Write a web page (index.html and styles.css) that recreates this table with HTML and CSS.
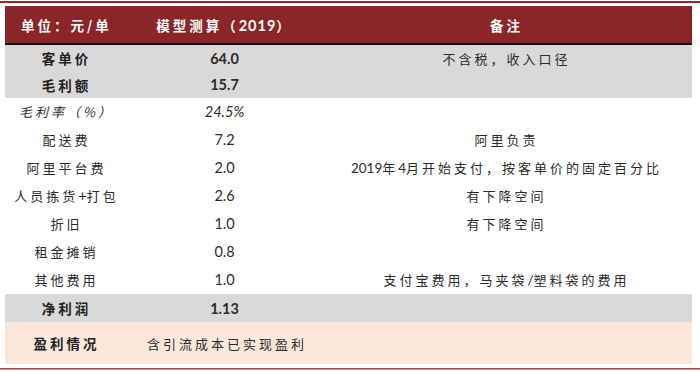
FILE: index.html
```html
<!DOCTYPE html>
<html lang="zh">
<head>
<meta charset="utf-8">
<link rel="stylesheet" href="styles.css">
</head>
<body>
<div class="rule-top"></div>
<table class="model">
  <thead>
    <tr class="head">
      <th class="c1 left">单位：元/单</th>
      <th class="c2">模型测算（<span class="num">2019</span>）</th>
      <th class="c3">备注</th>
    </tr>
  </thead>
  <tbody>
    <tr class="gray r27 strong">
      <td class="c1">客单价</td>
      <td class="c2 num b">64.0</td>
      <td class="c3 note top">不含税，收入口径</td>
    </tr>
    <tr class="gray r27 strong">
      <td class="c1">毛利额</td>
      <td class="c2 num b">15.7</td>
      <td class="c3"></td>
    </tr>
    <tr class="r27 ital">
      <td class="c1">毛利率（%）</td>
      <td class="c2 num">24.5%</td>
      <td class="c3"></td>
    </tr>
    <tr class="r28">
      <td class="c1">配送费</td>
      <td class="c2 num">7.2</td>
      <td class="c3 note">阿里负责</td>
    </tr>
    <tr class="r28">
      <td class="c1">阿里平台费</td>
      <td class="c2 num">2.0</td>
      <td class="c3 note"><span class="num">2019</span>年<span class="num">4</span>月开始支付，按客单价的固定百分比</td>
    </tr>
    <tr class="r28">
      <td class="c1">人员拣货<span class="num">+</span>打包</td>
      <td class="c2 num">2.6</td>
      <td class="c3 note">有下降空间</td>
    </tr>
    <tr class="r28">
      <td class="c1">折旧</td>
      <td class="c2 num">1.0</td>
      <td class="c3 note">有下降空间</td>
    </tr>
    <tr class="r28">
      <td class="c1">租金摊销</td>
      <td class="c2 num">0.8</td>
      <td class="c3"></td>
    </tr>
    <tr class="r29">
      <td class="c1">其他费用</td>
      <td class="c2 num">1.0</td>
      <td class="c3 note">支付宝费用，马夹袋<span class="num">/</span>塑料袋的费用</td>
    </tr>
    <tr class="gray r28 strong">
      <td class="c1">净利润</td>
      <td class="c2 num b">1.13</td>
      <td class="c3"></td>
    </tr>
    <tr class="peach r42">
      <td class="c1 strong-cell">盈利情况</td>
      <td class="merged" colspan="2">含引流成本已实现盈利</td>
    </tr>
  </tbody>
</table>
<div class="rule-bottom"></div>
</body>
</html>
```

FILE: styles.css
```css
* { box-sizing: border-box; }
html, body { margin: 0; padding: 0; background: #ffffff; }
body {
  width: 700px;
  height: 372px;
  overflow: hidden;
  font-family: "Noto Sans CJK SC", "Noto Sans", sans-serif;
  color: #2b2b2b;
  font-size: 13px;
}
.rule-top {
  margin-top: 1px;
  height: 2px;
  background: #8d2a2c;
}
.model {
  margin: 3px 0 0 5px;
  width: 687px;
  border-collapse: collapse;
  table-layout: fixed;
}
.model th, .model td {
  padding: 0;
  text-align: center;
  vertical-align: middle;
  white-space: nowrap;
  letter-spacing: 3px;
}
.c1 { width: 123px; }
.c2 { width: 193px; }
.c3 { width: 371px; }
.head {
  height: 38px;
  background: #8a2627;
  color: #ffffff;
  border-bottom: 2px solid #111111;
}
.head th { font-weight: 700; font-size: 13.5px; }
.model .head th.left { text-align: left; padding-left: 16px; letter-spacing: 3px; }
.model .head .num { letter-spacing: 1px; }
.model .num {
  font-family: "Lato", "Liberation Sans", sans-serif;
  font-size: 14.5px;
  letter-spacing: 0;
}
.b { font-weight: 700; }
.gray { background: #d9d9d9; }
.peach { background: #fce8da; }
.r27 { height: 27px; }
.r28 { height: 28px; }
.r29 { height: 29px; }
.r42 { height: 42px; }
.strong .c1, .strong-cell { font-weight: 700; color: #222; font-size: 13.5px; }
.ital td { font-style: italic; }
.note { color: #2b2b2b; }
.model .note .num { font-size: 13.5px; }
.top { vertical-align: top; padding-top: 1px; }
.merged {
  text-align: left !important;
  padding-left: 19px !important;
}
.rule-bottom {
  margin-top: 4px;
  height: 2px;
  background: #9a5353;
  border-bottom: 1px solid #c79a9a;
}
```
